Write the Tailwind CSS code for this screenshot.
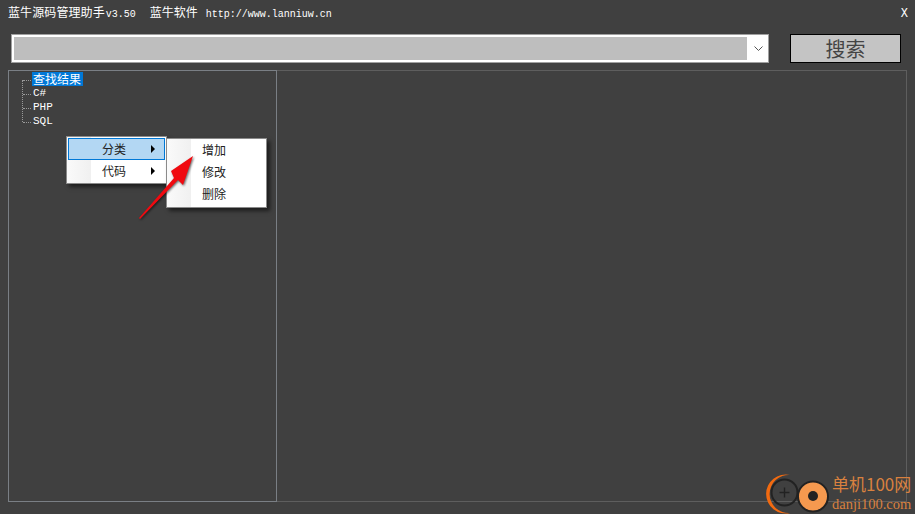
<!DOCTYPE html>
<html lang="zh-CN">
<head>
    <meta charset="UTF-8">
    <title>蓝牛源码管理助手</title>
    <script src="https://cdn.jsdelivr.net/npm/@tailwindcss/browser@4"></script>
</head>
<body class="relative w-[915px] h-[514px] overflow-hidden bg-[#404040] text-white font-['Liberation_Mono','Noto_Sans_CJK_SC',monospace]">
    <!-- title bar -->
    <div class="h-[34px] pl-[8px] pr-[7px] flex items-baseline text-[10px] leading-[24px]">
        <span class="font-['Noto_Sans_CJK_SC',sans-serif] text-[12px] tracking-[0.1px]">蓝牛源码管理助手</span>
        <span class="ml-[1px]">v3.50</span>
        <span class="ml-[14px] font-['Noto_Sans_CJK_SC',sans-serif] text-[12px]">蓝牛软件</span>
        <span class="ml-[8px]">http://www.lanniuw.cn</span>
        <span class="ml-auto text-[12px]">X</span>
    </div>

    <!-- search row -->
    <div class="h-[29px] pl-[11px] pr-[14px] flex items-stretch">
        <div class="w-[758px] border-[1px] border-[#a0a0a0] bg-white p-[2px] flex">
            <div class="flex-1 bg-[#bebebe]"></div>
            <div class="w-[19px] pl-[3px] flex items-center justify-center">
                <svg width="9" height="6" viewBox="0 0 9 6" fill="none" stroke="#555" stroke-width="1"><path d="M0.5 0.5 L4.5 4.5 L8.5 0.5"/></svg>
            </div>
        </div>
        <div class="ml-auto w-[111px] border-[1px] border-black bg-[#c4c4c4] flex items-center justify-center text-[#444] text-[20px] font-['Noto_Sans_CJK_SC',sans-serif]">搜索</div>
    </div>

    <!-- panels -->
    <div class="mt-[7px] ml-[8px] flex h-[432px] w-[899px]">
        <div class="w-[269px] border-[1px] border-[#7a7f85] pt-[1px] pl-[23px] text-[11px] leading-[15px]">
            <div class="h-[14px] flex">
                <span class="bg-[#0078d7] pl-[1px] pr-[2px] font-['Noto_Sans_CJK_SC',sans-serif] text-[12px] leading-[14px] h-[14px]">查找结果</span>
            </div>
            <div class="h-[14px] pl-[1px]">C#</div>
            <div class="h-[14px] pl-[1px]">PHP</div>
            <div class="h-[14px] pl-[1px]">SQL</div>
        </div>
        <div class="flex-1 border-[1px] border-l-0 border-[#5e5e5e]"></div>
    </div>

    <!-- tree dotted lines -->
    <div class="absolute left-[22px] top-[80px] w-[1px] h-[42px] border-l-[1px] border-dotted border-[#999]"></div>
    <div class="absolute left-[23px] top-[80px] w-[8px] border-t-[1px] border-dotted border-[#999]"></div>
    <div class="absolute left-[23px] top-[94px] w-[8px] border-t-[1px] border-dotted border-[#999]"></div>
    <div class="absolute left-[23px] top-[108px] w-[8px] border-t-[1px] border-dotted border-[#999]"></div>
    <div class="absolute left-[23px] top-[122px] w-[8px] border-t-[1px] border-dotted border-[#999]"></div>

    <!-- context menu -->
    <div class="absolute left-[66px] top-[136px] w-[101px] h-[48px] bg-white border-[1px] border-[#8a8a8a] shadow-[3px_3px_4px_rgba(0,0,0,0.55)] text-[#222] text-[12px] font-['Noto_Sans_CJK_SC',sans-serif]">
        <div class="absolute left-0 top-0 bottom-0 w-[24px] bg-gradient-to-r from-[#fafafa] to-[#f0f0f0]"></div>
        <div class="relative mx-[1px] mt-[1px] h-[22px] bg-[#b3d7f3] border-[1px] border-[#0078d7] flex items-center pl-[33px]">
            分类
            <span class="absolute left-[82px] top-[6px] w-0 h-0 border-y-[4px] border-y-transparent border-l-[4px] border-l-black"></span>
        </div>
        <div class="relative h-[22px] flex items-center pl-[35px]">
            代码
            <span class="absolute left-[84px] top-[7px] w-0 h-0 border-y-[4px] border-y-transparent border-l-[4px] border-l-black"></span>
        </div>
    </div>

    <!-- submenu -->
    <div class="absolute left-[166px] top-[138px] w-[101px] h-[70px] bg-white border-[1px] border-[#8a8a8a] shadow-[3px_3px_4px_rgba(0,0,0,0.55)] text-[#222] text-[12px] font-['Noto_Sans_CJK_SC',sans-serif] pl-[35px] leading-[22px]">
        <div class="absolute left-0 top-0 bottom-0 w-[24px] bg-gradient-to-r from-[#fafafa] to-[#f0f0f0]"></div>
        <div class="relative">增加</div>
        <div class="relative">修改</div>
        <div class="relative">删除</div>
    </div>

    <!-- red arrow -->
    <svg class="absolute left-[130px] top-[150px] drop-shadow-[1px_1px_1px_rgba(0,0,0,0.6)]" width="70" height="75" viewBox="0 0 70 75">
        <path d="M9 68 L44 28 L41 21 L63 6 L53 35 L48 30 L10 69 Z" fill="#f00a10"/>
    </svg>

    <!-- watermark -->
    <div class="absolute left-[766px] top-[472px] w-[149px] h-[42px]">
        <svg class="absolute left-0 top-0" width="65" height="42" viewBox="0 0 65 42">
            <circle cx="18.5" cy="20.5" r="13" fill="none" stroke="#222" stroke-width="2"/>
            <path d="M13.5 20.5 H23.5 M18.5 15.5 V25.5" stroke="#222" stroke-width="1.4"/>
            <path d="M24 3 A19.5 19.5 0 1 0 24 41 A19.05 19.05 0 1 1 24 3 Z" fill="#f26a10"/>
            <circle cx="47" cy="24.5" r="15" fill="#f5994f" stroke="#222" stroke-width="2"/>
            <circle cx="47" cy="24" r="5" fill="#222"/>
        </svg>
        <div class="absolute left-[66px] top-[1px] text-[#d9813f] text-[17px] leading-[22px] font-['Noto_Sans_CJK_SC',sans-serif] whitespace-nowrap">单机100网</div>
        <div class="absolute left-[66px] top-[24px] text-[#d9813f] text-[14.5px] leading-[16px] font-['Liberation_Serif',serif] whitespace-nowrap">danji100.com</div>
    </div>
</body>
</html>
